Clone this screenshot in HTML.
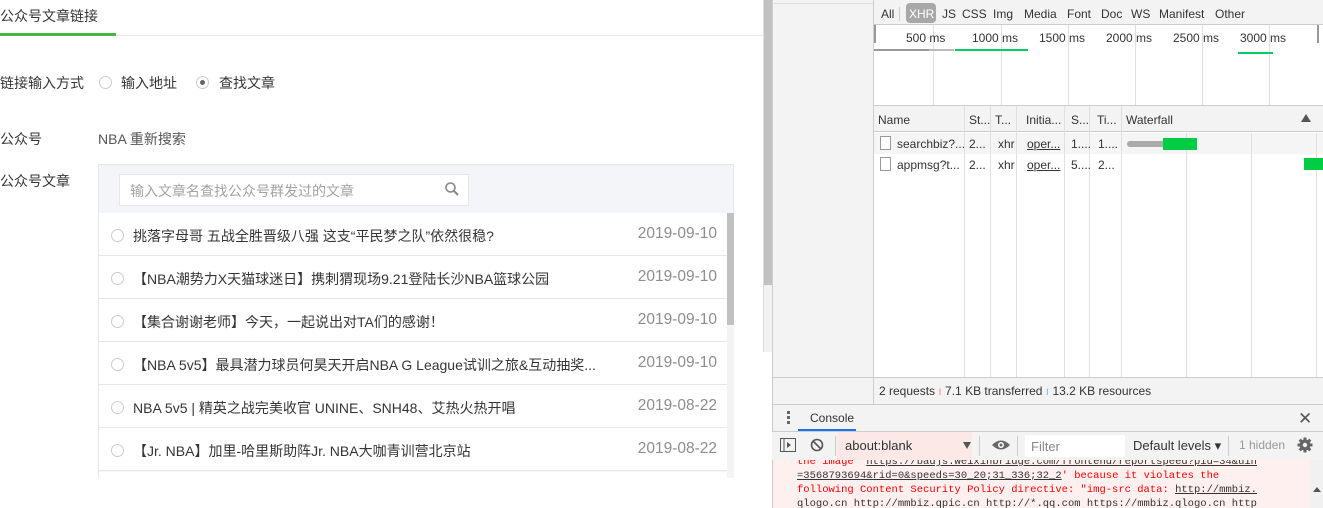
<!DOCTYPE html>
<html><head><meta charset="utf-8"><style>
*{box-sizing:border-box;margin:0;padding:0}
body{width:1323px;height:508px;overflow:hidden;position:relative;background:#fff;font-family:"Liberation Sans","Noto Sans CJK SC",sans-serif;color:#353535}
.a{position:absolute}
.cn{font-size:14px}
.radio{position:absolute;width:13px;height:13px;border:1px solid #ccc;border-radius:50%;background:#fff}
.dt{font-family:"Liberation Sans",sans-serif;font-size:12px;color:#333;white-space:nowrap}
.row{position:absolute;left:99px;width:628px;height:43px;border-bottom:1px solid #e7e7eb;background:#fff}
.row .radio{left:12px;top:16px}
.row .t{position:absolute;left:34px;top:13px;font-size:14px;color:#353535;white-space:nowrap}
.row .d{position:absolute;right:10px;top:12px;font-size:15.5px;color:#8d8d8d}
.vl{position:absolute;width:1px;background:#e0e0e0}
</style></head><body>
<div class="a cn" style="left:0;top:6px;color:#353535">公众号文章链接</div>
<div class="a" style="left:0;top:35px;width:763px;height:1px;background:#e7e7eb"></div>
<div class="a" style="left:0;top:33px;width:116px;height:3px;background:#44b549"></div>
<div class="a cn" style="left:0;top:73px">链接输入方式</div>
<div class="radio" style="left:99px;top:76px"></div>
<div class="a cn" style="left:121px;top:73px">输入地址</div>
<div class="radio" style="left:196px;top:76px"><div style="width:5px;height:5px;background:#666;border-radius:50%;margin:3px"></div></div>
<div class="a cn" style="left:219px;top:73px">查找文章</div>
<div class="a cn" style="left:0;top:129px">公众号</div>
<div class="a cn" style="left:98px;top:129px;color:#555">NBA 重新搜索</div>
<div class="a cn" style="left:0;top:171px">公众号文章</div>
<div class="a" style="left:98px;top:164px;width:636px;height:314px;border:1px solid #e7e7eb;background:#f4f5f9"></div>
<div class="a" style="left:119px;top:174px;width:350px;height:32px;border:1px solid #e7e7eb;background:#fff"></div>
<div class="a" style="left:130px;top:181px;font-size:14px;color:#a3a3a3">输入文章名查找公众号群发过的文章</div>
<svg class="a" style="left:444px;top:181px" width="16" height="16" viewBox="0 0 16 16"><circle cx="6.5" cy="6.5" r="4.5" fill="none" stroke="#888" stroke-width="1.6"/><path d="M10 10l4 4" stroke="#888" stroke-width="2"/></svg>
<div class="row" style="top:213px"><div class="radio"></div><div class="t">挑落字母哥 五战全胜晋级八强 这支“平民梦之队”依然很稳?</div><div class="d">2019-09-10</div></div>
<div class="row" style="top:256px"><div class="radio"></div><div class="t">【NBA潮势力X天猫球迷日】携刺猬现场9.21登陆长沙NBA篮球公园</div><div class="d">2019-09-10</div></div>
<div class="row" style="top:299px"><div class="radio"></div><div class="t">【集合谢谢老师】今天，一起说出对TA们的感谢！</div><div class="d">2019-09-10</div></div>
<div class="row" style="top:342px"><div class="radio"></div><div class="t">【NBA 5v5】最具潜力球员何昊天开启NBA G League试训之旅&amp;互动抽奖...</div><div class="d">2019-09-10</div></div>
<div class="row" style="top:385px"><div class="radio"></div><div class="t">NBA 5v5 | 精英之战完美收官 UNINE、SNH48、艾热火热开唱</div><div class="d">2019-08-22</div></div>
<div class="row" style="top:428px"><div class="radio"></div><div class="t">【Jr. NBA】加里-哈里斯助阵Jr. NBA大咖青训营北京站</div><div class="d">2019-08-22</div></div>
<div class="a" style="left:99px;top:472px;width:628px;height:6px;background:#fff"></div>
<div class="a" style="left:727px;top:213px;width:7px;height:265px;background:#f4f4f4"></div>
<div class="a" style="left:727px;top:213px;width:7px;height:112px;background:#c1c1c1"></div>
<div class="a" style="left:763px;top:0;width:9px;height:352px;background:#f1f1f1;border-left:1px solid #ddd"></div>
<div class="a" style="left:764px;top:0;width:8px;height:285px;background:#c1c1c1"></div>
<div class="a" style="left:772px;top:0;width:551px;height:508px;background:#f3f3f3;border-left:1px solid #ccc"></div>
<div class="a" style="left:772px;top:3px;width:101px;height:1px;background:#ddd"></div>
<div class="a" style="left:873px;top:0;width:1px;height:404px;background:#ccc"></div>
<div class="a dt" style="left:881px;top:7px">All</div>
<div class="a" style="left:899px;top:7px;width:1px;height:14px;background:#ccc"></div>
<div class="a" style="left:906px;top:3px;width:30px;height:20px;background:#a8a8a8;border-radius:4px"></div>
<div class="a dt" style="left:909px;top:7px;color:#fff">XHR</div>
<div class="a dt" style="left:942px;top:7px">JS</div>
<div class="a dt" style="left:962px;top:7px">CSS</div>
<div class="a dt" style="left:993px;top:7px">Img</div>
<div class="a dt" style="left:1024px;top:7px">Media</div>
<div class="a dt" style="left:1067px;top:7px">Font</div>
<div class="a dt" style="left:1101px;top:7px">Doc</div>
<div class="a dt" style="left:1131px;top:7px">WS</div>
<div class="a dt" style="left:1159px;top:7px">Manifest</div>
<div class="a dt" style="left:1215px;top:7px">Other</div>
<div class="a" style="left:874px;top:24px;width:449px;height:1px;background:#ccc"></div>
<div class="a" style="left:874px;top:25px;width:449px;height:80px;background:#fff"></div>
<div class="a" style="left:874px;top:25px;width:2px;height:18px;background:#999"></div>
<div class="vl" style="left:933px;top:25px;height:80px"></div>
<div class="vl" style="left:1001px;top:25px;height:80px"></div>
<div class="vl" style="left:1068px;top:25px;height:80px"></div>
<div class="vl" style="left:1135px;top:25px;height:80px"></div>
<div class="vl" style="left:1202px;top:25px;height:80px"></div>
<div class="vl" style="left:1269px;top:25px;height:80px"></div>
<div class="a dt" style="left:906px;top:31px">500 ms</div>
<div class="a dt" style="left:972px;top:31px">1000 ms</div>
<div class="a dt" style="left:1039px;top:31px">1500 ms</div>
<div class="a dt" style="left:1106px;top:31px">2000 ms</div>
<div class="a dt" style="left:1173px;top:31px">2500 ms</div>
<div class="a dt" style="left:1240px;top:31px">3000 ms</div>
<div class="a" style="left:1317px;top:25px;width:2px;height:18px;background:#999"></div>
<div class="a" style="left:874px;top:49px;width:55px;height:2px;background:#999"></div>
<div class="a" style="left:929px;top:49px;width:25px;height:2px;background:#bbb"></div>
<div class="a" style="left:955px;top:49px;width:73px;height:2px;background:#0c6"></div>
<div class="a" style="left:1238px;top:52px;width:35px;height:2px;background:#0c6"></div>
<div class="a" style="left:874px;top:105px;width:449px;height:1px;background:#ccc"></div>
<div class="a" style="left:874px;top:106px;width:449px;height:26px;background:#f3f3f3;border-bottom:1px solid #ccc"></div>
<div class="a" style="left:874px;top:132px;width:449px;height:245px;background:#fff"></div>
<div class="a" style="left:874px;top:133px;width:449px;height:21px;background:#f5f5f5"></div>
<div class="vl" style="left:964px;top:106px;height:271px"></div>
<div class="vl" style="left:990px;top:106px;height:271px"></div>
<div class="vl" style="left:1016px;top:106px;height:271px"></div>
<div class="vl" style="left:1064px;top:106px;height:271px"></div>
<div class="vl" style="left:1089px;top:106px;height:271px"></div>
<div class="vl" style="left:1121px;top:106px;height:271px"></div>
<div class="vl" style="left:1186px;top:133px;height:244px"></div>
<div class="vl" style="left:1251px;top:133px;height:244px"></div>
<div class="vl" style="left:1316px;top:133px;height:244px"></div>
<div class="a dt" style="left:878px;top:113px">Name</div>
<div class="a dt" style="left:969px;top:113px">St...</div>
<div class="a dt" style="left:995px;top:113px">T...</div>
<div class="a dt" style="left:1026px;top:113px">Initia...</div>
<div class="a dt" style="left:1071px;top:113px">S...</div>
<div class="a dt" style="left:1097px;top:113px">Ti...</div>
<div class="a dt" style="left:1126px;top:113px">Waterfall</div>
<div class="a" style="left:1301px;top:114px;width:0;height:0;border-left:5px solid transparent;border-right:5px solid transparent;border-bottom:8px solid #555"></div>
<div class="a" style="left:880px;top:136px;width:11px;height:14px;border:1px solid #999;background:#fff"></div>
<div class="a" style="left:880px;top:157px;width:11px;height:14px;border:1px solid #999;background:#fff"></div>
<div class="a dt" style="left:897px;top:137px">searchbiz?...</div>
<div class="a dt" style="left:969px;top:137px">2...</div>
<div class="a dt" style="left:998px;top:137px">xhr</div>
<div class="a dt" style="left:1027px;top:137px;text-decoration:underline">oper...</div>
<div class="a dt" style="left:1071px;top:137px">1....</div>
<div class="a dt" style="left:1098px;top:137px">1....</div>
<div class="a dt" style="left:897px;top:158px">appmsg?t...</div>
<div class="a dt" style="left:969px;top:158px">2...</div>
<div class="a dt" style="left:998px;top:158px">xhr</div>
<div class="a dt" style="left:1027px;top:158px;text-decoration:underline">oper...</div>
<div class="a dt" style="left:1071px;top:158px">5....</div>
<div class="a dt" style="left:1098px;top:158px">2...</div>
<div class="a" style="left:1127px;top:141px;width:36px;height:6px;background:#aaa;border-radius:3px 0 0 3px"></div>
<div class="a" style="left:1163px;top:138px;width:34px;height:12px;background:#0c4"></div>
<div class="a" style="left:1304px;top:158px;width:19px;height:12px;background:#0c4"></div>
<div class="a" style="left:772px;top:377px;width:551px;height:1px;background:#ccc"></div>
<div class="a dt" style="left:879px;top:384px">2 requests <span style="color:#f88">ı</span> 7.1 KB transferred <span style="color:#8bf">ı</span> 13.2 KB resources</div>
<div class="a" style="left:772px;top:404px;width:551px;height:1px;background:#ccc"></div>
<div class="a" style="left:787px;top:411px;width:3px;height:3px;background:#666;box-shadow:0 5px 0 #666,0 10px 0 #666"></div>
<div class="a dt" style="left:810px;top:411px">Console</div>
<div class="a" style="left:798px;top:429px;width:58px;height:2px;background:#1a73e8"></div>
<div class="a" style="left:1298px;top:409px;font-size:17px;color:#555;font-family:'DejaVu Sans',sans-serif">✕</div>
<div class="a" style="left:772px;top:431px;width:551px;height:1px;background:#ccc"></div>
<div class="a" style="left:772px;top:432px;width:551px;height:28px;background:#f3f3f3"></div>
<svg class="a" style="left:780px;top:438px" width="16" height="14" viewBox="0 0 16 14"><rect x="0.5" y="0.5" width="15" height="13" fill="none" stroke="#555"/><path d="M4 1v12" stroke="#555"/><path d="M7 4l4 3-4 3z" fill="#555"/></svg>
<svg class="a" style="left:810px;top:438px" width="14" height="14" viewBox="0 0 14 14"><circle cx="7" cy="7" r="5.5" fill="none" stroke="#555" stroke-width="1.6"/><path d="M3 3l8 8" stroke="#555" stroke-width="1.6"/></svg>
<div class="a" style="left:835px;top:436px;width:1px;height:20px;background:#ccc"></div>
<div class="a" style="left:837px;top:432px;width:135px;height:28px;background:#fde8e8"></div>
<div class="a dt" style="left:845px;top:438px;font-size:13px">about:blank</div>
<div class="a" style="left:963px;top:442px;width:0;height:0;border-left:4px solid transparent;border-right:4px solid transparent;border-top:7px solid #555"></div>
<div class="a" style="left:979px;top:436px;width:1px;height:20px;background:#ccc"></div>
<svg class="a" style="left:991px;top:439px" width="20" height="12" viewBox="0 0 20 12"><path d="M1 6Q10 -3 19 6Q10 15 1 6z" fill="#666"/><circle cx="10" cy="6" r="3" fill="#fff"/><circle cx="10" cy="6" r="1.5" fill="#666"/></svg>
<div class="a" style="left:1017px;top:436px;width:1px;height:20px;background:#ccc"></div>
<div class="a" style="left:1025px;top:435px;width:100px;height:22px;background:#fff"></div>
<div class="a dt" style="left:1031px;top:439px;color:#888;font-size:13px">Filter</div>
<div class="a dt" style="left:1133px;top:438px;font-size:13px">Default levels ▾</div>
<div class="a" style="left:1228px;top:436px;width:1px;height:20px;background:#ccc"></div>
<div class="a dt" style="left:1239px;top:438px;color:#999">1 hidden</div>
<svg class="a" style="left:1297px;top:437px" width="16" height="16" viewBox="0 0 16 16"><g fill="#666"><circle cx="8" cy="8" r="5.5"/><rect x="6.5" y="0.5" width="3" height="15"/><rect x="0.5" y="6.5" width="15" height="3"/><rect x="6.5" y="0.5" width="3" height="15" transform="rotate(45 8 8)"/><rect x="6.5" y="0.5" width="3" height="15" transform="rotate(-45 8 8)"/></g><circle cx="8" cy="8" r="2.2" fill="#f3f3f3"/></svg>
<div class="a" style="left:772px;top:460px;width:1px;height:48px;background:#ccc"></div>
<div class="a" style="left:773px;top:460px;width:537px;height:48px;background:#fff0f0;overflow:hidden">
<pre style="position:absolute;left:24px;top:-5px;font-family:'Liberation Mono',monospace;font-size:10.5px;line-height:14px;color:#f00">the image '<u style="color:#333">https://badjs.weixinbridge.com/frontend/reportspeed?pid=34&amp;uin</u>
<u style="color:#333">=3568793694&amp;rid=0&amp;speeds=30_20;31_336;32_2</u>' because it violates the
following Content Security Policy directive: "img-src data: <u style="color:#333">http://mmbiz.</u>
<span style="color:#333">qlogo.cn http://mmbiz.qpic.cn http://*.qq.com https://mmbiz.qlogo.cn http</span></pre></div>
<div class="a" style="left:1310px;top:460px;width:13px;height:48px;background:#f1f1f1"></div>
<div class="a" style="left:1313px;top:487px;width:0;height:0;border-left:4px solid transparent;border-right:4px solid transparent;border-bottom:5px solid #555"></div>
</body></html>
